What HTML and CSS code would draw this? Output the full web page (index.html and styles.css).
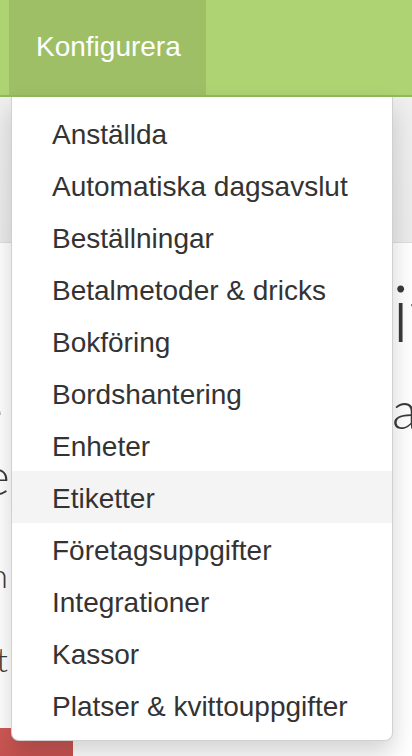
FILE: index.html
```html
<!DOCTYPE html>
<html lang="sv">
<head>
	<meta charset="UTF-8">
	<title>Konfigurera</title>
	<link rel="stylesheet" href="styles.css">
</head>
<body>
	<div class="navbar">
		<ul class="nav">
			<li class="dropdown open">
				<a href="#" class="toggle">Konfigurera</a>
				<ul class="dropdown-menu">
					<li><a href="#">Anställda</a></li>
					<li><a href="#">Automatiska dagsavslut</a></li>
					<li><a href="#">Beställningar</a></li>
					<li><a href="#">Betalmetoder &amp; dricks</a></li>
					<li><a href="#">Bokföring</a></li>
					<li><a href="#">Bordshantering</a></li>
					<li><a href="#">Enheter</a></li>
					<li class="hover"><a href="#">Etiketter</a></li>
					<li><a href="#">Företagsuppgifter</a></li>
					<li><a href="#">Integrationer</a></li>
					<li><a href="#">Kassor</a></li>
					<li><a href="#">Platser &amp; kvittouppgifter</a></li>
				</ul>
			</li>
		</ul>
	</div>
	<div class="subbar"></div>
	<div class="content">
		<div class="row title">
			<span class="l"></span>
			<span class="r">Profit</span>
		</div>
		<div class="row big first">
			<span class="l"><span>Välkommen till tjänste</span></span>
			<span class="r">arbete</span>
		</div>
		<div class="row big">
			<span class="l"><span>ekonomiöversikte</span></span>
			<span class="r"></span>
		</div>
		<div class="row small gap1">
			<span class="l"><span>Se din försäljningen</span></span>
			<span class="r"></span>
		</div>
		<div class="row small gap2">
			<span class="l"><span>och dagens rapport</span></span>
			<span class="r"></span>
		</div>
		<a href="#" class="btn-danger">Avsluta</a>
	</div>
</body>
</html>
```

FILE: styles.css
```css
*{
	margin: 0;
	padding: 0;
}
html, body{
	overflow: hidden;
}
body{
	width: 412px;
	height: 756px;
	background-color: #fff;
	font-family: "Liberation Sans", Arial, Helvetica, sans-serif;
	color: #333;
}
a{
	text-decoration: none;
}
ul{
	list-style: none;
}

/* top bar */
.navbar{
	height: 95px;
	background-color: #aed373;
	border-bottom: 2px solid #94b95c;
	position: relative;
	z-index: 10;
}
.nav{
	padding-left: 9px;
	display: flex;
}
.dropdown{
	position: relative;
}
.dropdown .toggle{
	display: block;
	width: 197px;
	box-sizing: border-box;
	padding: 27px 0 28px 27px;
	line-height: 40px;
	font-size: 28px;
	color: #fff;
	background-color: #9ebf66;
}
.dropdown-menu{
	position: absolute;
	top: 97px;
	left: 2px;
	width: 380px;
	padding: 10px 0 9px;
	background-color: #fff;
	border: 1px solid rgba(0,0,0,0.18);
	border-top: 0;
	border-radius: 0 0 8px 8px;
	box-shadow: 0 12px 24px rgba(0,0,0,0.175);
}
.dropdown-menu li a{
	display: block;
	padding: 8px 40px 4px;
	line-height: 40px;
	font-size: 28px;
	color: #333;
	white-space: nowrap;
}
.dropdown-menu li.hover a{
	background-color: #f4f4f4;
}

/* page behind the menu */
.subbar{
	height: 145px;
	background: linear-gradient(#efefef, #ebebeb);
	border-bottom: 1px solid #dedede;
}
.content{
	padding-top: 24px;
	color: #3a3a3a;
}
.row{
	display: flex;
	gap: 389px;
	white-space: nowrap;
}
.row .l{
	flex: none;
	width: 6px;
	display: flex;
	justify-content: flex-end;
}
.row .r{
	flex: none;
}
.title{
	font-family: Lato, "Liberation Sans", sans-serif;
	font-weight: 300;
	font-size: 78px;
	line-height: 90px;
	font-variant-ligatures: none;
	justify-content: flex-end;
	margin-right: -24px;
}
.title .l{
	display: none;
}
.big{
	font-family: Lato, "Liberation Sans", sans-serif;
	font-size: 52px;
	line-height: 66px;
	font-weight: 300;
}
.big.first{
	margin-top: 19px;
}
.big.first .l{
	width: 3px;
}
.big .l{
	width: 10px;
}
.small{
	font-family: Lato, "Liberation Sans", sans-serif;
	font-weight: 300;
	font-size: 34px;
	line-height: 50px;
}
.small .l{
	width: 8px;
}
.gap1{
	margin-top: 42px;
}
.gap2{
	margin-top: 34px;
}
.btn-danger{
	display: block;
	width: 73px;
	height: 40px;
	margin-top: 44px;
	background: linear-gradient(#d15a57, #c24f4d);
	color: #fff;
	font-size: 28px;
	line-height: 40px;
	text-indent: -200px;
	overflow: hidden;
	border-radius: 0 6px 0 0;
}
```
